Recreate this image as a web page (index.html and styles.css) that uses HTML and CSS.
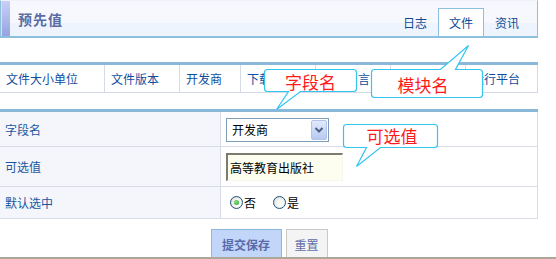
FILE: index.html
```html
<!DOCTYPE html>
<html lang="zh-CN">
<head>
<meta charset="utf-8">
<title>预先值</title>
<link rel="stylesheet" href="styles.css">
</head>
<body>
<div class="page">
  <div class="head">
    <div class="head-bar"></div>
    <h1 class="head-title">预先值</h1>
    <nav class="tabs">
      <span class="tab">日志</span>
      <span class="tab tab-active">文件</span>
      <span class="tab">资讯</span>
    </nav>
  </div>

  <div class="cols">
    <div class="col w105">文件大小单位</div>
    <div class="col w75">文件版本</div>
    <div class="col w61">开发商</div>
    <div class="col w75">下载</div>
    <div class="col w75 col-tail">言</div>
    <div class="col w75"></div>
    <div class="col w72">运行平台</div>
  </div>

  <div class="form">
    <div class="frow r1">
      <div class="flabel">字段名</div>
      <div class="fval">
        <div class="select">
          <span class="select-text">开发商</span>
          <svg class="select-btn" width="16" height="20" viewBox="0 0 16 20">
            <defs>
              <linearGradient id="sb" x1="0" y1="0" x2="0" y2="1">
                <stop offset="0" stop-color="#e2eafc"/>
                <stop offset="1" stop-color="#b6c8f2"/>
              </linearGradient>
            </defs>
            <rect x="0.5" y="0.5" width="15" height="19" rx="1.5" fill="url(#sb)" stroke="#b2c4ec"/>
            <polyline points="4.5,8 8,11.5 11.5,8" fill="none" stroke="#4d6185" stroke-width="2"/>
          </svg>
        </div>
      </div>
    </div>
    <div class="frow r2">
      <div class="flabel">可选值</div>
      <div class="fval">
        <input class="textbox" type="text" value="高等教育出版社">
      </div>
    </div>
    <div class="frow r3">
      <div class="flabel">默认选中</div>
      <div class="fval">
        <div class="radios">
          <span class="radio radio-on"></span><span class="radio-label">否</span>
          <span class="radio"></span><span class="radio-label">是</span>
        </div>
      </div>
    </div>
  </div>

  <div class="actions">
    <button class="btn btn-primary">提交保存</button>
    <button class="btn btn-plain">重置</button>
  </div>

  <svg class="callouts" width="556" height="259" viewBox="0 0 556 259">
    <path d="M267.5,69.5 H353.5 Q356.5,69.5 356.5,72.5 V88.5 Q356.5,91.5 353.5,91.5 H300.5 L276.5,109.5 L288.5,91.5 H267.5 Q264.5,91.5 264.5,88.5 V72.5 Q264.5,69.5 267.5,69.5 Z"/>
    <path d="M374.5,69.5 H440.5 L468.5,45.5 L455.5,69.5 H479.5 Q482.5,69.5 482.5,72.5 V94.5 Q482.5,97.5 479.5,97.5 H374.5 Q371.5,97.5 371.5,94.5 V72.5 Q371.5,69.5 374.5,69.5 Z"/>
    <path d="M346.5,124.5 H434.5 Q437.5,124.5 437.5,127.5 V144.5 Q437.5,147.5 434.5,147.5 H380.5 L356.5,166.5 L366.5,147.5 H346.5 Q343.5,147.5 343.5,144.5 V127.5 Q343.5,124.5 346.5,124.5 Z"/>
  </svg>
  <div class="callout-text ct1">字段名</div>
  <div class="callout-text ct2">模块名</div>
  <div class="callout-text ct3">可选值</div>
</div>
<div class="baseline"></div>
</body>
</html>
```
FILE: styles.css
```css
* { box-sizing: border-box; }

body {
  margin: 0;
  font-family: "Noto Sans CJK SC", "Noto Sans CJK JP", sans-serif;
  font-size: 12px;
  color: #000;
  background: #fff;
  width: 556px;
  height: 259px;
  overflow: hidden;
}

.page {
  position: relative;
  width: 538px;
}

/* header */
.head {
  display: flex;
  height: 38px;
  border: 1px solid #8cc0dc;
  border-top-color: #eef2fa;
  border-bottom-width: 2px;
  background: linear-gradient(#f6f8fe 0, #f6f8fe 22px, #edf4fe 22px, #edf4fe 100%);
}

.head-bar {
  width: 9px;
  background: linear-gradient(#c8d0f8, #97a3df);
  border-left: 1px solid #d8def8;
}

.head-title {
  margin: 0 0 0 8px;
  align-self: center;
  font-size: 14px;
  line-height: 14px;
  font-weight: bold;
  letter-spacing: 1px;
  color: #5b6ba3;
}

.tabs {
  margin-left: auto;
  margin-right: 7px;
  display: flex;
  align-items: flex-end;
}

.tab {
  width: 46px;
  height: 28px;
  padding: 4px 0 3px;
  line-height: 20px;
  text-align: center;
  color: #0f4a94;
  border: 1px solid transparent;
  border-bottom: 0;
}

.tab-active {
  background: #fff;
  border-color: #8cc0dc;
}

/* column header table */
.cols {
  display: flex;
  margin-top: 24px;
  border-top: 3px solid #8ab8d8;
  border-bottom: 1px solid #d4dae6;
}

.col {
  height: 27px;
  line-height: 27px;
  padding-left: 6px;
  color: #0f4e9e;
  border-right: 1px solid #d4dae6;
  white-space: nowrap;
  overflow: hidden;
}

.col-tail { padding-left: 42px; }

.w105 { width: 105px; }
.w75 { width: 75px; }
.w61 { width: 61px; }
.w72 { width: 72px; }

/* form table */
.form {
  margin-top: 16px;
  border-top: 3px solid #8ab8d8;
}

.frow {
  display: grid;
  grid-template-columns: 221px 317px;
  border-bottom: 1px solid #d8dce8;
}

.r1 { height: 35px; }
.r2 { height: 40px; }
.r3 { height: 32px; }

.flabel {
  display: flex;
  align-items: center;
  padding-left: 5px;
  background: #f4f6fc;
  border-right: 1px solid #d8dce8;
  color: #1a56a0;
}

.fval {
  display: flex;
  align-items: center;
  padding-left: 5px;
  border-right: 1px solid #d8dce8;
}

.select {
  display: flex;
  align-items: center;
  width: 103px;
  height: 24px;
  margin-top: 1px;
  border: 1px solid #7f9db9;
  background: #fff;
}

.select-text {
  padding-left: 5px;
  color: #000;
}

.select-btn {
  margin-left: auto;
  margin-right: 1px;
  display: block;
}

.textbox {
  width: 117px;
  height: 28px;
  margin: 0;
  padding: 0 0 0 2px;
  font: inherit;
  font-size: 12px;
  color: #000;
  background: #fdfdf0;
  border-top: 2px solid #7b7b6e;
  border-left: 2px solid #7b7b6e;
  border-right: 1px solid #f6f6ee;
  border-bottom: 1px solid #f6f6ee;
  outline: none;
}

.radios {
  display: flex;
  align-items: center;
  margin-left: 4px;
}

.radio {
  width: 13px;
  height: 13px;
  border-radius: 50%;
  border: 1px solid #1c5180;
  background: radial-gradient(circle at 60% 60%, #ffffff 0, #f2f2ee 45%, #d2d2cc 100%);
  position: relative;
}

.radio-on::after {
  content: "";
  position: absolute;
  left: 3px;
  top: 3px;
  width: 5px;
  height: 5px;
  border-radius: 50%;
  background: radial-gradient(circle at 40% 40%, #8fe08f, #21a121);
}

.radio-label {
  margin-left: 1px;
  margin-right: 17px;
  color: #000;
}

/* buttons */
.actions {
  display: flex;
  justify-content: center;
  gap: 4px;
  margin-top: 10px;
}

.btn {
  height: 29px;
  margin: 0;
  padding: 3px 0 0;
  font: inherit;
  font-size: 12px;
  line-height: 20px;
  text-align: center;
}

.btn-primary {
  width: 71px;
  background: #c2d6fa;
  border: 1px solid #8cb8e0;
  color: #5a6aa8;
  font-weight: bold;
}

.btn-plain {
  width: 42px;
  background: #f4f4f4;
  border: 1px solid #c8c8c8;
  color: #5f6fa8;
}

.baseline {
  width: 556px;
  height: 2px;
  background: #aca899;
  position: absolute;
  left: 0;
  top: 257px;
}

/* callouts (overlay) */
.callouts {
  position: absolute;
  left: 0;
  top: 0;
  overflow: visible;
  pointer-events: none;
}

.callouts path {
  fill: #fff;
  stroke: #33c6f0;
  stroke-width: 1.2;
}

.callout-text {
  position: absolute;
  display: flex;
  align-items: center;
  justify-content: center;
  color: #ff1a1a;
  font-size: 17px;
  line-height: 17px;
}

.ct1 { left: 264px; top: 70px; width: 93px; height: 22px; }
.ct2 { left: 371px; top: 71px; width: 104px; height: 27px; }
.ct3 { left: 343px; top: 124px; width: 98px; height: 23px; }
```
